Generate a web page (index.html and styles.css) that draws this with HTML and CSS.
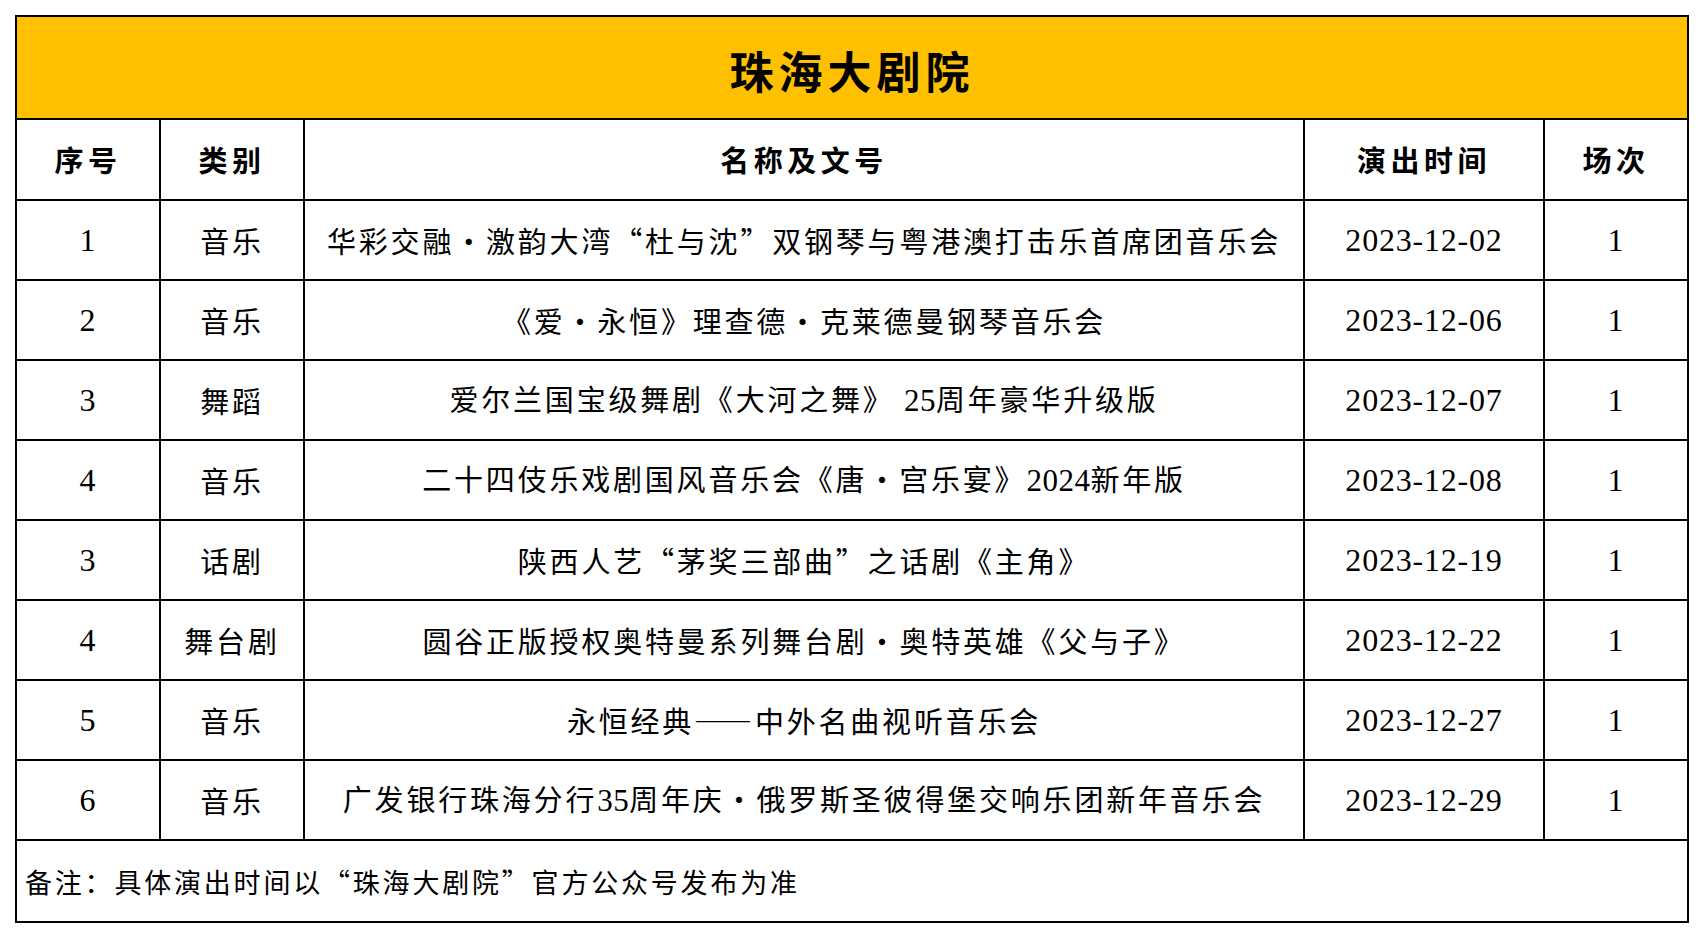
FILE: index.html
```html
<!DOCTYPE html>
<html lang="zh-CN">
<head>
<meta charset="utf-8">
<title>珠海大剧院</title>
<link rel="stylesheet" href="styles.css">
</head>
<body>
<table class="sheet">
  <colgroup>
    <col class="c-no">
    <col class="c-type">
    <col class="c-name">
    <col class="c-date">
    <col class="c-count">
  </colgroup>
  <tr class="title-row"><td colspan="5" class="title">珠海大剧院</td></tr>
  <tr class="head-row">
    <th>序号</th><th>类别</th><th>名称及文号</th><th>演出时间</th><th>场次</th>
  </tr>
  <tr class="row"><td class="num">1</td><td>音乐</td><td>华彩交融·激韵大湾“杜与沈”双钢琴与粤港澳打击乐首席团音乐会</td><td class="num">2023-12-02</td><td class="num">1</td></tr>
  <tr class="row"><td class="num">2</td><td>音乐</td><td>《爱·永恒》理查德·克莱德曼钢琴音乐会</td><td class="num">2023-12-06</td><td class="num">1</td></tr>
  <tr class="row"><td class="num">3</td><td>舞蹈</td><td>爱尔兰国宝级舞剧《大河之舞》 <span class="num">25</span>周年豪华升级版</td><td class="num">2023-12-07</td><td class="num">1</td></tr>
  <tr class="row"><td class="num">4</td><td>音乐</td><td>二十四伎乐戏剧国风音乐会《唐·宫乐宴》<span class="num">2024</span>新年版</td><td class="num">2023-12-08</td><td class="num">1</td></tr>
  <tr class="row"><td class="num">3</td><td>话剧</td><td>陕西人艺“茅奖三部曲”之话剧《主角》</td><td class="num">2023-12-19</td><td class="num">1</td></tr>
  <tr class="row"><td class="num">4</td><td>舞台剧</td><td>圆谷正版授权奥特曼系列舞台剧·奥特英雄《父与子》</td><td class="num">2023-12-22</td><td class="num">1</td></tr>
  <tr class="row"><td class="num">5</td><td>音乐</td><td>永恒经典——中外名曲视听音乐会</td><td class="num">2023-12-27</td><td class="num">1</td></tr>
  <tr class="row"><td class="num">6</td><td>音乐</td><td>广发银行珠海分行<span class="num">35</span>周年庆·俄罗斯圣彼得堡交响乐团新年音乐会</td><td class="num">2023-12-29</td><td class="num">1</td></tr>
  <tr class="note-row"><td colspan="5" class="note">备注：具体演出时间以“珠海大剧院”官方公众号发布为准</td></tr>
</table>
</body>
</html>
```
FILE: styles.css
```css
html, body {
  margin: 0;
  padding: 0;
  background: #ffffff;
}

body {
  padding: 15px 0 0 15px;
  font-family: "Noto Sans CJK SC", "Liberation Serif", sans-serif;
  color: #000000;
}

.sheet {
  border-collapse: collapse;
  table-layout: fixed;
  width: 1672px;
}

.c-no { width: 144px; }
.c-type { width: 144px; }
.c-name { width: 1000px; }
.c-date { width: 240px; }
.c-count { width: 144px; }

.sheet td,
.sheet th {
  border: 2px solid #000000;
  padding: 0;
  text-align: center;
  vertical-align: middle;
  white-space: nowrap;
  font-size: 29px;
  font-weight: 400;
  letter-spacing: 2.8px;
  line-height: 1;
}

.title-row { height: 103px; }
.head-row { height: 81px; }
.row { height: 80px; }
.note-row { height: 82px; }

.sheet .title {
  background: #ffc000;
  font-size: 44px;
  font-weight: 700;
  letter-spacing: 5px;
  padding-top: 5px;
}

.sheet th {
  font-size: 29px;
  font-weight: 700;
  letter-spacing: 4.5px;
}

.num {
  font-family: "Liberation Serif", "Noto Sans CJK SC", serif;
}

.sheet td.num {
  font-size: 32px;
  letter-spacing: 0.8px;
}

span.num {
  font-size: 31px;
  letter-spacing: 0.5px;
}

.sheet .note {
  text-align: left;
  padding-left: 8px;
  font-size: 27px;
  letter-spacing: 2.8px;
}
```
